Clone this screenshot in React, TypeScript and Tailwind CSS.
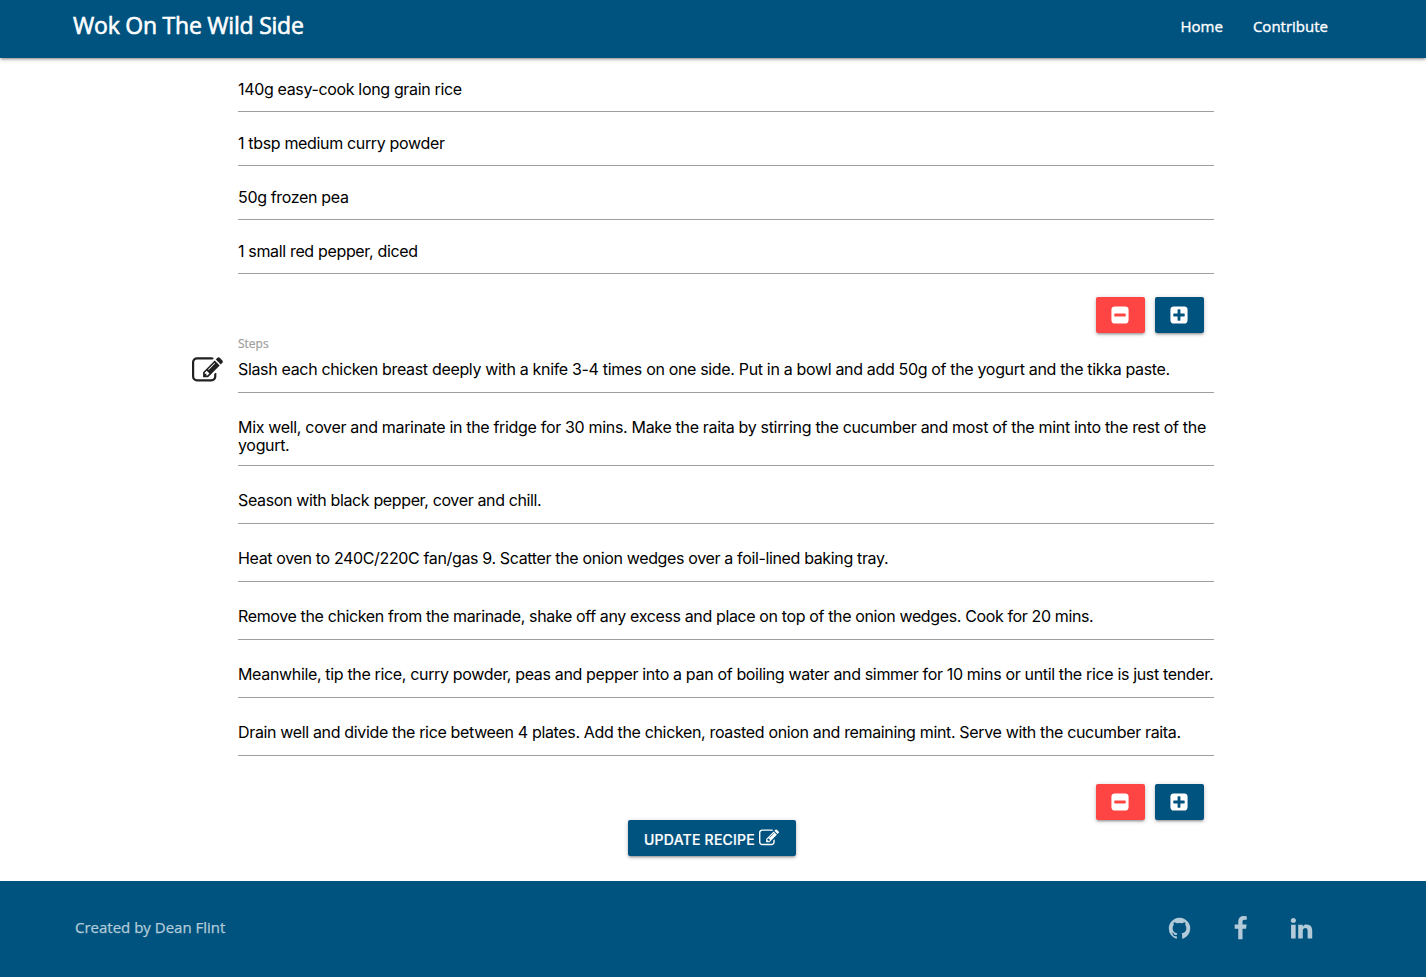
import React from "react";

const ingredients = [
  "140g easy-cook long grain rice",
  "1 tbsp medium curry powder",
  "50g frozen pea",
  "1 small red pepper, diced",
];

const steps = [
  { tracking: "tracking-[-0.334px]", lines: ["Slash each chicken breast deeply with a knife 3-4 times on one side. Put in a bowl and add 50g of the yogurt and the tikka paste."] },
  {
    tracking: "tracking-[-0.322px]",
    lines: [
      "Mix well, cover and marinate in the fridge for 30 mins. Make the raita by stirring the cucumber and most of the mint into the rest of the",
      "yogurt.",
    ],
  },
  { tracking: "tracking-[-0.365px]", lines: ["Season with black pepper, cover and chill."] },
  { tracking: "tracking-[-0.356px]", lines: ["Heat oven to 240C/220C fan/gas 9. Scatter the onion wedges over a foil-lined baking tray."] },
  { tracking: "tracking-[-0.37px]", lines: ["Remove the chicken from the marinade, shake off any excess and place on top of the onion wedges. Cook for 20 mins."] },
  { tracking: "tracking-[-0.342px]", lines: ["Meanwhile, tip the rice, curry powder, peas and pepper into a pan of boiling water and simmer for 10 mins or until the rice is just tender."] },
  { tracking: "tracking-[-0.346px]", lines: ["Drain well and divide the rice between 4 plates. Add the chicken, roasted onion and remaining mint. Serve with the cucumber raita."] },
];

const icons = {
  edit: "M888 1184l116-116-152-152-116 116v56h96v96h56zm440-720q-16-16-33 1l-350 350q-17 17-1 33t33-1l350-350q17-17 1-33zm80 594v190q0 119-84.5 203.5t-203.5 84.5h-832q-119 0-203.5-84.5t-84.5-203.5v-832q0-119 84.5-203.5t203.5-84.5h832q63 0 117 25 15 7 18 23 3 17-9 29l-49 49q-14 14-32 8-23-6-45-6h-832q-66 0-113 47t-47 113v832q0 66 47 113t113 47h832q66 0 113-47t47-113v-126q0-13 9-22l64-64q15-15 35-7t20 29zm-96-738l288 288-672 672h-288v-288zm444 132l-92 92-288-288 92-92q28-28 68-28t68 28l152 152q28 28 28 68t-28 68z",
  plus: "M1408 960v-128q0-26-19-45t-45-19h-320v-320q0-26-19-45t-45-19h-128q-26 0-45 19t-19 45v320h-320q-26 0-45 19t-19 45v128q0 26 19 45t45 19h320v320q0 26 19 45t45 19h128q26 0 45-19t19-45v-320h320q26 0 45-19t19-45zm256-544v960q0 119-84.5 203.5t-203.5 84.5h-960q-119 0-203.5-84.5t-84.5-203.5v-960q0-119 84.5-203.5t203.5-84.5h960q119 0 203.5 84.5t84.5 203.5z",
  minus: "M1408 960v-128q0-26-19-45t-45-19h-896q-26 0-45 19t-19 45v128q0 26 19 45t45 19h896q26 0 45-19t19-45zm256-544v960q0 119-84.5 203.5t-203.5 84.5h-960q-119 0-203.5-84.5t-84.5-203.5v-960q0-119 84.5-203.5t203.5-84.5h960q119 0 203.5 84.5t84.5 203.5z",
  github: "M896 128q209 0 385.5 103t279.5 279.5 103 385.5q0 251-146.5 451.5t-378.5 277.5q-27 5-40-7t-13-30q0-3 .5-76.5t.5-134.5q0-97-52-142 57-6 102.5-18t94-39 81-66.5 53-105 20.5-150.5q0-119-79-206 37-91-8-204-28-9-81 11t-92 44l-38 24q-93-26-192-26t-192 26q-16-11-42.5-27t-83.5-38.5-85-13.5q-45 113-8 204-79 87-79 206 0 85 20.5 150t52.5 105 80.5 67 94 39 102.5 18q-39 36-49 103-21 10-45 15t-57 5-65.5-21.5-55.5-62.5q-19-32-48.5-52t-49.5-24l-20-3q-21 0-29 4.5t-5 11.5 9 14 13 12l7 5q22 10 43.5 38t31.5 51l10 23q13 38 44 61.5t67 30 69.5 7 55.5-3.5l23-4q0 38 .5 88.5t.5 54.5q0 18-13 30t-40 7q-232-77-378.5-277.5t-146.5-451.5q0-209 103-385.5t279.5-279.5 385.5-103z",
  facebook: "M1343 12v264h-157q-86 0-116 36t-30 108v189h293l-39 296h-254v759h-306v-759h-255v-296h255v-218q0-186 104-288.5t277-102.5q147 0 228 12z",
  linkedin: "M477 625v991h-330v-991h330zm21-306q1 73-50.5 122t-135.5 49h-2q-82 0-132-49t-50-122q0-74 51.5-122.5t134.5-48.5 133 48.5 51 122.5zm1166 729v568h-329v-530q0-105-40.5-164.5t-126.5-59.5q-63 0-105.5 34.5t-63.5 85.5q-11 30-11 81v553h-329q2-399 2-647t-1-296l-1-48h329v144h-2q20-32 41-56t56.5-52 87-43.5 114.5-15.5q171 0 275 113.5t104 332.5z",
};

function Icon({ name, className }: { name: keyof typeof icons; className: string }) {
  return (
    <svg viewBox="0 0 1792 1792" fill="currentColor" className={className}>
      <path d={icons[name]} />
    </svg>
  );
}

const raised = "shadow-[0_2px_2px_0_rgba(0,0,0,0.14),0_3px_1px_-2px_rgba(0,0,0,0.12),0_1px_5px_0_rgba(0,0,0,0.2)]";

function RowButtons() {
  return (
    <div className="flex h-9 justify-end gap-[10px] pr-[10px] text-white">
      <button className={`flex w-[49px] items-center justify-center rounded-[2px] bg-[#ff4444] pr-px ${raised}`}>
        <Icon name="minus" className="size-5" />
      </button>
      <button className={`flex w-[49px] items-center justify-center rounded-[2px] bg-[#00537f] pr-px ${raised}`}>
        <Icon name="plus" className="size-5" />
      </button>
    </div>
  );
}

export default function App() {
  return (
    <div className="flex h-[977px] w-[1426px] flex-col overflow-hidden bg-white font-['Open_Sans',sans-serif]">
      <header className="z-10 flex h-[58px] shrink-0 items-start justify-between bg-[#00537f] pr-[98px] pl-[73px] text-white shadow-[0_2px_2px_0_rgba(0,0,0,0.14),0_3px_1px_-2px_rgba(0,0,0,0.12),0_1px_5px_0_rgba(0,0,0,0.2)]">
        <h1 className="pt-[9px] text-[23px] leading-8 tracking-[-0.22px] whitespace-nowrap [-webkit-text-stroke:0.6px]">Wok On The Wild Side</h1>
        <nav className="flex gap-[30px] pt-[14px] text-[15px] leading-6 [-webkit-text-stroke:0.35px]">
          <a>Home</a>
          <a>Contribute</a>
        </nav>
      </header>

      <main className="ml-[238px] w-[976px] grow font-['Inter',sans-serif] text-[16px] tracking-[-0.342px] text-black">
        {ingredients.map((text) => (
          <div key={text} className="flex h-[54px] items-end border-b border-[#9e9e9e] pb-[12px] leading-[19px] whitespace-nowrap">
            {text}
          </div>
        ))}
        <div className="mt-[23px]">
          <RowButtons />
        </div>
        <div className="relative">
          <Icon name="edit" className="absolute top-[22px] -left-[46px] size-[31px] text-[#212121]" />
          <div className="h-[23px] pt-[2px] font-['Open_Sans',sans-serif] text-[12px] leading-[18px] tracking-normal text-[#9e9e9e] [-webkit-text-stroke:0.2px]">Steps</div>
          {steps.map(({ lines, tracking }, i) => (
            <div
              key={i}
              className={`${i === 0 ? "pt-[4px]" : "pt-[25px]"} ${lines.length > 1 ? "pb-[11px]" : "pb-[14px]"} ${tracking} border-b border-[#9e9e9e]`}
            >
              {lines.map((line) => (
                <p key={line} className="h-[18px] leading-[18px] whitespace-nowrap">{line}</p>
              ))}
            </div>
          ))}
        </div>
        <div className="mt-[28px]">
          <RowButtons />
        </div>
        <button className={`ml-[390px] flex h-9 w-[168px] items-start rounded-[2px] bg-[#00537f] pl-[16px] text-[14px] font-medium tracking-[0.23px] text-white ${raised}`}>
          <span className="pt-[10px] leading-5 whitespace-nowrap [-webkit-text-stroke:0.2px]">UPDATE RECIPE</span>
          <Icon name="edit" className="mt-[8px] ml-[4px] size-5" />
        </button>
      </main>

      <footer className="flex h-24 shrink-0 items-center justify-between bg-[#00537f] pr-[112px] pl-[75px] text-[15px] text-[#b3cbd9]">
        <span className="pb-[4px] [-webkit-text-stroke:0.25px]">Created by Dean Flint</span>
        <div className="flex items-center gap-[36px] pb-px">
          <Icon name="github" className="size-[25px]" />
          <Icon name="facebook" className="size-[25px]" />
          <Icon name="linkedin" className="size-[25px]" />
        </div>
      </footer>
    </div>
  );
}
